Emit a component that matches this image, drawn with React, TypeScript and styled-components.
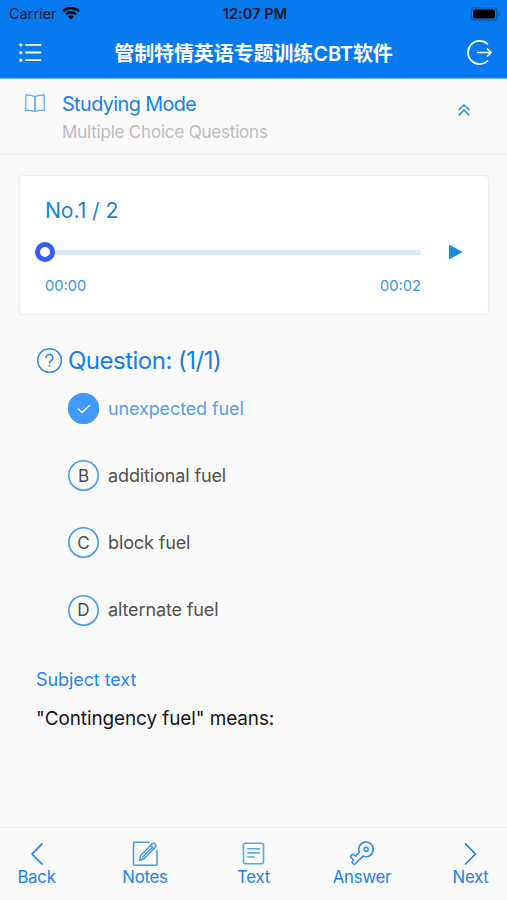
import React from "react";
import styled, { createGlobalStyle } from "styled-components";

const GlobalStyle = createGlobalStyle`
  * { box-sizing: border-box; }
  body {
    margin: 0;
    background: #fafafa;
    font-family: Inter, "Noto Sans CJK SC", sans-serif;
    color: #4b4b4b;
  }
  svg { display: block; fill: none; flex: none; }
  button { font: inherit; border: 0; padding: 0; background: none; color: inherit; }
`;

const Screen = styled.div`
  width: 507px;
  height: 900px;
  display: flex;
  flex-direction: column;
  overflow: hidden;
  background: #fafafa;
`;

const Label = styled.span<{ $size: number; $track?: number; $color?: string; $weight?: number }>`
  font-size: ${(p) => p.$size}px;
  line-height: 24px;
  letter-spacing: ${(p) => p.$track ?? 0}px;
  color: ${(p) => p.$color ?? "inherit"};
  font-weight: ${(p) => p.$weight ?? 400};
  white-space: nowrap;
`;

const Top = styled.header`
  flex: none;
  height: 79px;
  background: #087af0;
  color: #fff;
  border-bottom: 1px solid #72bbf8;
`;

const StatusBar = styled.div`
  height: 28px;
  padding: 0 6px 0 9px;
  display: grid;
  grid-template-columns: 1fr auto 1fr;
  align-items: center;
  color: #07172b;
`;

const Carrier = styled.div`
  display: flex;
  align-items: center;
  gap: 5px;
`;

const Wifi = styled.svg`
  margin-bottom: 2px;
`;

const Battery = styled.svg`
  justify-self: end;
`;

const TitleBar = styled.div`
  height: 50px;
  padding: 0 13px 0 19px;
  display: grid;
  grid-template-columns: 28px 1fr 28px;
  align-items: center;
`;

const Title = styled.h1`
  margin: 0;
  padding: 1px 6px 0 0;
  text-align: center;
  font-size: 20px;
  font-weight: 600;
  line-height: 26px;
  letter-spacing: -0.1px;
  white-space: nowrap;
`;

const ModeBar = styled.section`
  flex: none;
  height: 76px;
  padding: 13px 36px 0 25px;
  display: flex;
  align-items: flex-start;
  border-bottom: 1px solid #eeeeee;
`;

const ModeText = styled.div`
  flex: 1;
  display: flex;
  flex-direction: column;
  gap: 4px;
  margin-left: 17px;
`;

const Chevron = styled.div`
  margin-top: 11px;
`;

const Player = styled.section`
  flex: none;
  height: 140px;
  margin: 20px 18px 0 19px;
  padding: 22px 24px 0 25px;
  background: #fff;
  border: 1px solid #efefef;
  border-radius: 4px;
  box-shadow: 0 0 1px rgba(0, 0, 0, 0.06);
`;

const Track = styled.div`
  display: flex;
  align-items: center;
  height: 20px;
  margin-top: 20px;
`;

const Knob = styled.div`
  width: 20px;
  height: 20px;
  flex: none;
  margin-left: -10px;
  border: 5px solid #365cf5;
  border-radius: 50%;
`;

const Rail = styled.div`
  width: 366px;
  height: 5px;
  background: #d9e9fa;
  border-radius: 0 3px 3px 0;
`;

const Play = styled.button`
  margin-left: 28px;
`;

const Times = styled.div`
  display: flex;
  justify-content: space-between;
  width: 376px;
  margin-top: 12px;
`;

const Question = styled.main`
  flex: 1;
  padding: 33px 36px 0;
`;

const Heading = styled.div`
  display: flex;
  align-items: center;
  height: 26px;
  gap: 5px;
`;

const HelpIcon = styled.svg`
  margin-bottom: 2px;
`;

const Options = styled.div`
  display: flex;
  flex-direction: column;
  gap: 36px;
  margin: 19px 0 0 32px;
`;

const Option = styled.div`
  display: flex;
  align-items: center;
  gap: 9px;
  height: 31.2px;
`;

const Letter = styled.div<{ $checked?: boolean }>`
  width: 31px;
  height: 31px;
  display: flex;
  align-items: center;
  justify-content: center;
  box-shadow: inset 0 0 0 1.6px ${(p) => (p.$checked ? "#3f9bfb" : "#4299f4")};
  border-radius: 50%;
  background: ${(p) => (p.$checked ? "#3f9bfb" : "transparent")};
`;

const Subject = styled.div`
  display: flex;
  flex-direction: column;
  gap: 15px;
  margin-top: 42px;
`;

const Nav = styled.nav`
  flex: none;
  height: 73px;
  border-top: 1px solid #e3ebfa;
  display: grid;
  grid-template-columns: 73px 144px 73px 144px 73px;
  padding-top: 12px;
`;

const Tab = styled.button`
  display: flex;
  flex-direction: column;
  align-items: center;
  justify-content: flex-start;
  color: #1b82ea;

  svg {
    margin-bottom: -3px;
  }
`;

const options = [
  { key: "A", text: "unexpected fuel", checked: true },
  { key: "B", text: "additional fuel" },
  { key: "C", text: "block fuel" },
  { key: "D", text: "alternate fuel" },
];

const tabs = [
  {
    name: "Back",
    icon: <path d="M19 3.8 9 14l10 10" strokeWidth="1.7" />,
  },
  {
    name: "Notes",
    icon: (
      <g stroke="#419be0" strokeWidth="1.5">
        <path d="M18 2.3H3.5q-1 0-1 1v21q0 1 1 1H25q1 0 1-1V10.5" />
        <path d="m8.500 20.500 1.300-5.300L21 4a2.300 2.300 0 0 1 3.300 0 2.300 2.300 0 0 1 0 3.300L13.200 18.500zM19.500 5.500l3.300 3.300M11.500 17.200l9-9" />
      </g>
    ),
  },
  {
    name: "Text",
    icon: (
      <g stroke="#59a8df" strokeWidth="1.6">
        <rect x="3.5" y="3.2" width="20" height="20.5" rx="2" />
        <path d="M7.800 8.700h11.700M7.800 12.900h11.700M7.800 17h6.200" />
      </g>
    ),
  },
  {
    name: "Answer",
    icon: (
      <g stroke="#308feb" strokeWidth="1.6">
        <path d="M11.200 12.200A7.300 7.300 0 1 1 15.100 16.100L7.400 23.800q-1 1-2 0l-1-1q-.8-.8 0-1.600l1.200-1.200-2.600-2.600q-.8-.8 0-1.600l1-1q.8-.8 1.600 0l1.900 1.300z" />
        <circle cx="18.200" cy="9.200" r="2" />
      </g>
    ),
  },
  {
    name: "Next",
    icon: <path d="m8.500 3.800 10 10.200-10 10" strokeWidth="1.7" />,
  },
];

export default function App() {
  return (
    <Screen>
      <GlobalStyle />
      <Top>
        <StatusBar>
          <Carrier>
            <Label $size={14.5}>Carrier</Label>
            <Wifi width="18" height="14" viewBox="0 0 18 14" stroke="#000" strokeWidth="2.5">
              <path d="M1 5.2a11.400 11.400 0 0 1 16 0M4 8.400a7 7 0 0 1 10 0" />
              <path d="m9 13.600-3-3a4.200 4.200 0 0 1 6 0z" fill="#000" stroke="none" />
            </Wifi>
          </Carrier>
          <Label $size={14.5} $weight={600} $track={0.1}>12:07 PM</Label>
          <Battery width="31" height="14" viewBox="0 0 31 14">
            <rect x="1.3" y=".8" width="25.5" height="12.4" rx="3.5" stroke="#0757a9" strokeWidth="1.2" />
            <rect x="3" y="2.5" width="22" height="9" rx="2" fill="#000" />
            <path d="M28.5 4.5q2.5 2.5 0 5z" fill="#0757a9" />
          </Battery>
        </StatusBar>
        <TitleBar>
          <svg width="24" height="20" viewBox="0 0 24 20" stroke="#fff" strokeWidth="1.8" strokeLinecap="round">
            <path d="M7 1.800h14.500M7 9.500h14.500M7 17.200h14.500" />
            <path d="M1.800 1.800h.1M1.800 9.500h.1M1.800 17.200h.1" strokeWidth="3.2" />
          </svg>
          <Title>管制特情英语专题训练CBT软件</Title>
          <svg width="28" height="28" viewBox="0 0 28 28" stroke="#fff" strokeWidth="1.7" strokeLinecap="round" strokeLinejoin="round">
            <path d="M21.500 5A11.600 11.600 0 1 0 21.500 22M11.500 13.500h13.500M21.500 10l3.700 3.500-3.700 3.500" />
          </svg>
        </TitleBar>
      </Top>
      <ModeBar>
        <svg width="20" height="21" viewBox="0 0 20 21" stroke="#64a9ee" strokeWidth="1.3" strokeLinejoin="round">
          <path d="M10 4.500Q5.500 2.800.8 3v15.500Q5.500 18 10 19.700q4.500-1.700 9.200-1.200V3Q14.500 2.800 10 4.500z" />
          <path d="M10 4.500v15" strokeWidth="1.8" />
        </svg>
        <ModeText>
          <Label $size={19.8} $track={-0.57} $color="#1580ec">Studying Mode</Label>
          <Label $size={17} $track={-0.2} $color="#bcbcbc">Multiple Choice Questions</Label>
        </ModeText>
        <Chevron>
          <svg width="14" height="14" viewBox="0 0 14 14" stroke="#318beb" strokeWidth="1.6">
            <path d="m1.500 7 5.500-5L12.500 7M1.500 12.500l5.500-5.500 5.500 5.500" />
          </svg>
        </Chevron>
      </ModeBar>
      <Player>
        <Label $size={21.2} $track={-0.1} $color="#1c83df">No.1 / 2</Label>
        <Track>
          <Knob />
          <Rail />
          <Play aria-label="Play">
            <svg width="14" height="16" viewBox="0 0 14 16">
              <path d="M0 .5 13.500 8 0 15.500z" fill="#158be5" />
            </svg>
          </Play>
        </Track>
        <Times>
          <Label $size={14.7} $color="#3b96df">00:00</Label>
          <Label $size={14.7} $color="#3b96df">00:02</Label>
        </Times>
      </Player>
      <Question>
        <Heading>
          <HelpIcon width="27" height="27" viewBox="0 0 27 27" stroke="#308eea" strokeWidth="1.6">
            <circle cx="13.5" cy="13.5" r="11.8" />
            <path d="M10.200 10.700a3.300 3.300 0 1 1 5.200 2.700q-1.900 1.300-1.900 2.600" strokeLinecap="round" />
            <circle cx="13.5" cy="18.8" r="1" fill="#308eea" stroke="none" />
          </HelpIcon>
          <Label $size={24} $track={-0.5} $color="#147fe7">Question: (1/1)</Label>
        </Heading>
        <Options>
          {options.map((o) => (
            <Option key={o.key}>
              <Letter $checked={o.checked}>
                {o.checked ? (
                  <svg width="14" height="10" viewBox="0 0 14 10" stroke="#fff" strokeWidth="1.4">
                    <path d="m1 4.500 4 4L13 1" />
                  </svg>
                ) : (
                  <Label $size={17}>{o.key}</Label>
                )}
              </Letter>
              <Label $size={18} $track={-0.12} $color={o.checked ? "#559ff0" : "#505050"}>{o.text}</Label>
            </Option>
          ))}
        </Options>
        <Subject>
          <Label $size={18} $track={-0.08} $color="#2486ec">Subject text</Label>
          <Label $size={18.9} $track={-0.07} $color="#151515">"Contingency fuel" means:</Label>
        </Subject>
      </Question>
      <Nav>
        {tabs.map((t) => (
          <Tab key={t.name}>
            <svg width="28" height="28" viewBox="0 0 28 28" stroke="#1b82ea" strokeLinejoin="round" strokeLinecap="round">
              {t.icon}
            </svg>
            <Label $size={16.8} $track={-0.25}>{t.name}</Label>
          </Tab>
        ))}
      </Nav>
    </Screen>
  );
}
